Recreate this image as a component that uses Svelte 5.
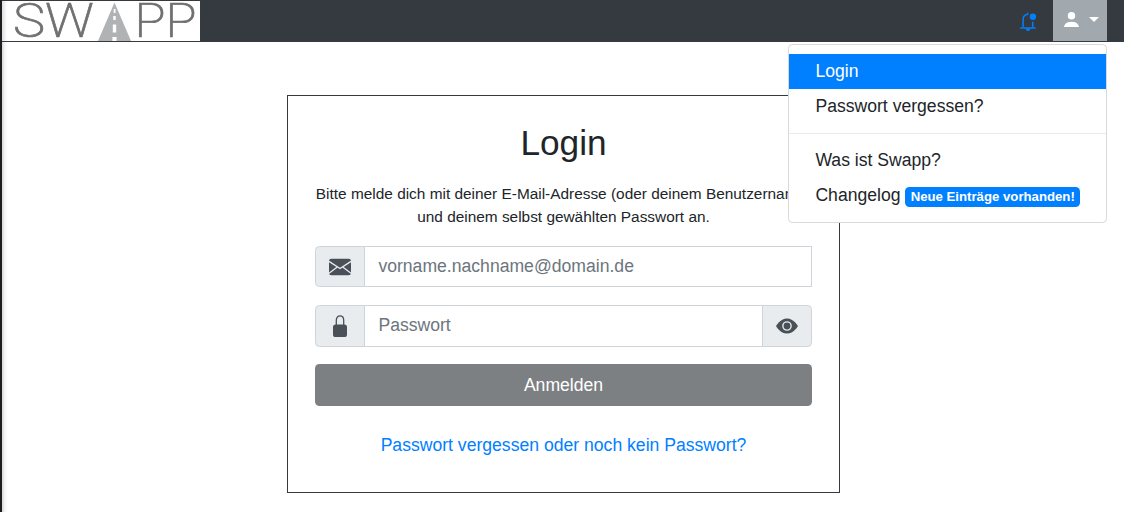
<script>
  let email = $state('');
  let password = $state('');
  let visible = $state(false);
</script>

<div class="page">
  <header>
    <a class="logo" href="#home" aria-label="SWAPP">
      <svg width="198" height="40" viewBox="0 0 198 40">
        <text x="11" y="36.300" textLength="81" lengthAdjust="spacingAndGlyphs">SW</text>
        <path fill="#b0b2b4" d="M112.500 1.500 129 40H96z" />
        <path fill="#fff" d="M111.700 8h1.800v4h-1.800zM111.300 15h2.400v4h-2.400zM110.800 23.500h3.400v8h-3.400zM110.400 36h4.200v4h-4.200z" />
        <text x="132.500" y="36.300" textLength="62" lengthAdjust="spacingAndGlyphs">PP</text>
      </svg>
    </a>
    <nav>
      <a class="bell" href="#news" aria-label="Neuigkeiten">
        <svg width="18" height="20" viewBox="0 0 18 20" fill="none" stroke="#0080ff" stroke-width="1.500">
          <path d="M8.600.800v1.400C5.900 2.600 4.100 4.500 4.100 7.500V15M13.700 9.800V15M1.200 16h15.500" />
          <circle cx="13.900" cy="4.800" r="3.200" fill="#0080ff" stroke="none" />
          <path d="M6.600 16.500a2.400 2.400 0 0 0 4.800 0z" fill="#0080ff" stroke="none" />
        </svg>
      </a>
      <button class="user" aria-label="Benutzermenü">
        <svg width="17" height="17" viewBox="0 0 16 16" fill="#fff"><path d="M1 15s0-5 7-5 7 5 7 5 0 0-1 0H1zM8 8a3.500 3.500 0 1 0 0-7 3.500 3.500 0 0 0 0 7z" /></svg>
        <span class="caret"></span>
      </button>
    </nav>
  </header>

  <div class="menu">
    <a class="item active" href="#login">Login</a>
    <a class="item" href="#reset">Passwort vergessen?</a>
    <div class="divider"></div>
    <a class="item" href="#about">Was ist Swapp?</a>
    <a class="item" href="#changelog">Changelog <span class="badge">Neue Einträge vorhanden!</span></a>
  </div>

  <main>
    <h1>Login</h1>
    <p>Bitte melde dich mit deiner E-Mail-Adresse (oder deinem Benutzername)<br />und deinem selbst gewählten Passwort an.</p>
    <div class="group mail">
      <span class="addon left">
        <svg width="22" height="18" viewBox="0 0 22 18" fill="#495057">
          <rect y=".7" width="22" height="16.600" rx="2.400" />
          <path d="M0 3.400 11 10.500 22 3.400M0 15.200 8.300 9M22 15.200 13.700 9" fill="none" stroke="#e9ecef" stroke-width="1.300" />
        </svg>
      </span>
      <input type="text" placeholder="vorname.nachname@domain.de" bind:value={email} />
    </div>
    <div class="group pass">
      <span class="addon left">
        <svg width="22" height="22" viewBox="0 0 22 22">
          <rect x="4" y="9.500" width="14" height="12.500" rx="2.600" fill="#495057" />
          <path d="M7.300 10V5.200c0-5.800 7.400-5.800 7.400 0V10" fill="none" stroke="#495057" stroke-width="1.300" />
        </svg>
      </span>
      <input type={visible ? 'text' : 'password'} placeholder="Passwort" bind:value={password} />
      <button class="addon right" aria-label="Passwort anzeigen" onclick={() => (visible = !visible)}>
        <svg width="22" height="22" viewBox="0 0 16 16" fill="#495057"><path d="M10.500 8a2.500 2.500 0 1 1-5 0 2.500 2.500 0 0 1 5 0z" /><path d="M0 8s3-5.500 8-5.500S16 8 16 8s-3 5.500-8 5.500S0 8 0 8zm8 3.500a3.500 3.500 0 1 0 0-7 3.500 3.500 0 0 0 0 7z" /></svg>
      </button>
    </div>
    <button class="submit">Anmelden</button>
    <a class="forgot" href="#reset">Passwort vergessen oder noch kein Passwort?</a>
  </main>
</div>

<style>
  :global(body) { margin: 0; overflow: hidden; background: #fff; }
  * { box-sizing: border-box; }
  a { text-decoration: none; }
  button { margin: 0; padding: 0; border: 0; font: inherit; }
  .page {
    position: relative;
    height: 512px;
    overflow: hidden;
    font: 17.6px/26.4px "Liberation Sans", Arial, sans-serif;
    color: #212529;
    border-left: 2px solid #1d1d20;
    background: linear-gradient(90deg, #d5d5d5, #f7f7f7 3px, #fff 6px);
  }
  header { display: flex; justify-content: space-between; height: 42px; background: #343a40; padding: 1px 17px 1px 0; }
  .logo { display: block; width: 198px; height: 40px; background: linear-gradient(90deg, #ddd, #fff 5px); }
  .logo svg, .bell svg, .user svg, .addon svg { display: block; }
  .logo svg { overflow: visible; }
  .logo text { font: 200 47.5px Roboto, "Liberation Sans", sans-serif; fill: #707070; stroke: #707070; stroke-width: 0.7px; }
  nav { display: flex; margin-top: -1px; height: 41px; }
  .bell { padding: 12px 16px 0 0; }
  .user { width: 54px; height: 41px; display: flex; gap: 9px; padding: 11px 0 0 10px; background: #a1a8ae; }
  .caret { margin-top: 6px; width: 0; height: 0; border: 5.3px solid transparent; border-top-color: #fff; border-bottom: 0; }
  .menu {
    position: absolute;
    z-index: 2;
    top: 44px;
    left: 786px;
    width: 319px;
    height: 179px;
    padding: 9px 0;
    background: #fff;
    border: 1px solid #d9d9d9;
    border-radius: 4.4px;
  }
  .item { display: block; height: 35px; padding: 4px 26px 4px 26.4px; color: #212529; white-space: nowrap; }
  .active { background: #0080ff; color: #fff; }
  .divider { height: 1px; margin: 9px 0; background: #e9ecef; }
  .badge { display: inline-block; padding: 3.3px 5.28px; font-size: 13.2px; line-height: 13.2px; font-weight: 700; color: #fff; background: #0080ff; border-radius: 4.4px; vertical-align: baseline; }
  main { display: flex; flex-direction: column; width: 553px; height: 398px; margin: 53px 0 0 285px; padding: 26px 27px; border: 1px solid #343a40; text-align: center; }
  h1 { margin: 0; font-weight: 400; font-size: 35.2px; line-height: 42px; }
  p { margin: 18px -20px 0; font-size: 15.4px; line-height: 23px; white-space: nowrap; }
  .group { display: flex; }
  .mail { height: 41px; margin-top: 18px; }
  .pass { height: 42px; margin-top: 18px; }
  .addon { display: flex; align-items: center; justify-content: center; width: 50px; flex: none; background: #e9ecef; border: 1px solid #ced4da; }
  .left { border-radius: 4.4px 0 0 4.4px; }
  .right { border-radius: 0 4.4px 4.4px 0; }
  input { flex: 1; min-width: 0; margin: 0 0 0 -1px; padding: 0 13.2px 1px 13.4px; border: 1px solid #ced4da; border-radius: 0; outline: 0; font: inherit; color: #495057; background: #fff; }
  .pass input { margin-right: -1px; padding-bottom: 2px; }
  input::placeholder { color: #6c757d; opacity: 1; }
  .submit { height: 42px; margin-top: 17px; border-radius: 4.4px; background: #7c8083; color: #fff; }
  .forgot { margin-top: 26px; color: #0080ff; }
</style>
